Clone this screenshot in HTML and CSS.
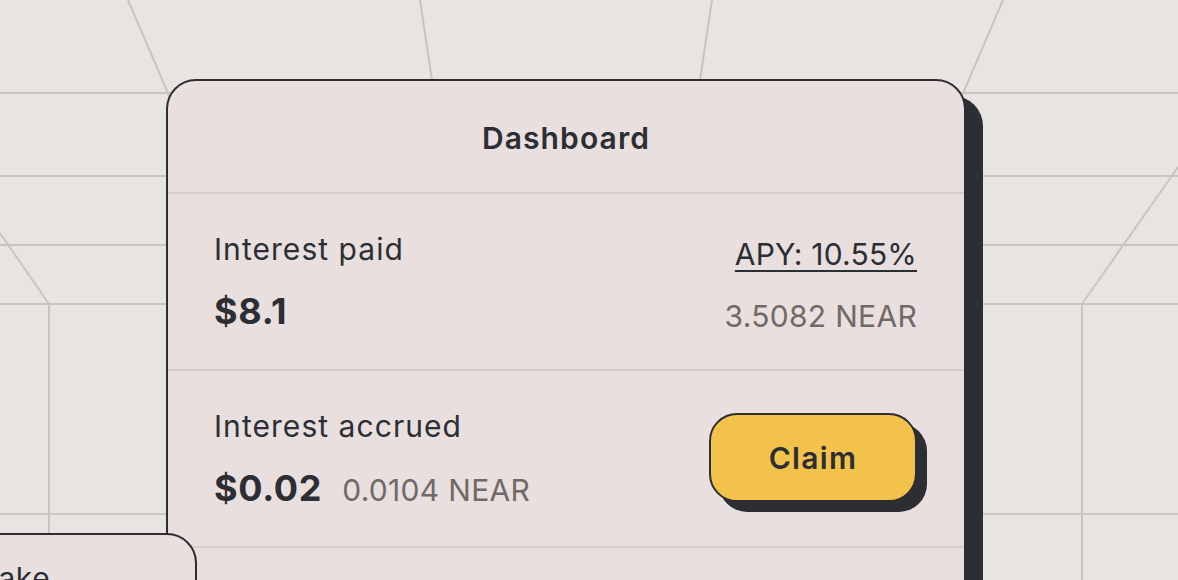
FILE: index.html
```html
<!DOCTYPE html>
<html lang="en">
<head>
<meta charset="utf-8">
<title>Dashboard</title>
<link rel="stylesheet" href="styles.css">
</head>
<body>
<main class="stage">
  <section class="card">
    <header class="card-head">Dashboard</header>
    <div class="row">
      <div class="col">
        <div class="label">Interest paid</div>
        <div class="amount-line"><span class="amount">$8.1</span></div>
      </div>
      <div class="col col-right">
        <a class="apy" href="#">APY: 10.55%</a>
        <div class="near">3.5082 NEAR</div>
      </div>
    </div>
    <div class="row row-center">
      <div class="col">
        <div class="label">Interest accrued</div>
        <div class="amount-line"><span class="amount">$0.02</span><span class="near">0.0104 NEAR</span></div>
      </div>
      <button class="claim" type="button">Claim</button>
    </div>
    <div class="row row-empty"></div>
  </section>
</main>
<aside class="side-card"><span class="side-title">Stake</span></aside>
</body>
</html>
```
FILE: styles.css
```css
* { box-sizing: border-box; }

html, body {
  margin: 0;
  height: 580px;
  overflow: hidden;
}

body {
  position: relative;
  font-family: Inter, "Noto Sans", sans-serif;
  color: #2c2e33;
  background-color: #e8e4e1;
  background-image: url("data:image/svg+xml,%3Csvg xmlns='http://www.w3.org/2000/svg' width='1178' height='580'%3E%3Cg stroke='%23c9c4c2' stroke-width='2' fill='none'%3E%3Cpath d='M0 93H1178M0 176H1178M0 245H1178M0 304H1178M0 514H1178M128 0L180 121M0 233L49 304V580M420 0L432 80M712 0L700 80M1003 0L952 119M1178 167L1082 304V580'/%3E%3C/g%3E%3C/svg%3E");
  background-repeat: no-repeat;
}

.stage {
  padding: 79px 0 0 166px;
}

.card {
  width: 800px;
  height: 620px;
  background: #e8dfde;
  border: 2px solid #2c2e33;
  border-radius: 30px;
  box-shadow: 17px 17px 0 #2c2e33;
}

.card-head {
  height: 113px;
  display: flex;
  align-items: center;
  justify-content: center;
  padding-top: 2px;
  font-size: 30px;
  font-weight: 600;
  letter-spacing: 1.1px;
  border-bottom: 2px solid #d6cecd;
}

.row {
  height: 177px;
  padding: 37px 47px 0 47px;
  display: flex;
  justify-content: space-between;
  border-bottom: 2px solid #d6cecd;
}

.row-center {
  align-items: flex-start;
}

.col {
  display: flex;
  flex-direction: column;
}

.col-right {
  align-items: flex-end;
  padding-top: 5px;
}

.label {
  font-size: 30px;
  line-height: 36px;
  letter-spacing: 1.05px;
  margin-left: -1px;
  margin-bottom: 22px;
}

.amount-line {
  display: flex;
  align-items: baseline;
  gap: 20px;
  line-height: 44px;
  margin-left: -1px;
}

.amount {
  font-size: 36px;
  font-weight: 700;
  letter-spacing: 0.7px;
}

.near {
  font-size: 30px;
  line-height: 36px;
  color: #6f6a67;
  letter-spacing: 0.3px;
}

.apy {
  font-size: 30px;
  line-height: 36px;
  color: #2c2e33;
  text-decoration: underline;
  text-decoration-thickness: 2px;
  text-underline-offset: 5px;
  letter-spacing: 0.2px;
  margin-bottom: 26px;
}

.claim {
  margin-top: 5px;
  width: 208px;
  height: 89px;
  background: #f3c24b;
  border: 2px solid #2c2e33;
  border-radius: 28px;
  box-shadow: 10px 10px 0 #2c2e33;
  font-family: inherit;
  font-size: 30px;
  font-weight: 600;
  color: #2c2e33;
  letter-spacing: 1.3px;
  padding: 0;
}

.row-empty {
  border-bottom: none;
}

.side-card {
  position: absolute;
  left: -203px;
  top: 533px;
  width: 400px;
  height: 120px;
  background: #e8dfde;
  border: 2px solid #2c2e33;
  border-radius: 30px;
  padding: 25px 0 0 169px;
}

.side-title {
  font-size: 30px;
  line-height: 36px;
  letter-spacing: 0.6px;
}
```
